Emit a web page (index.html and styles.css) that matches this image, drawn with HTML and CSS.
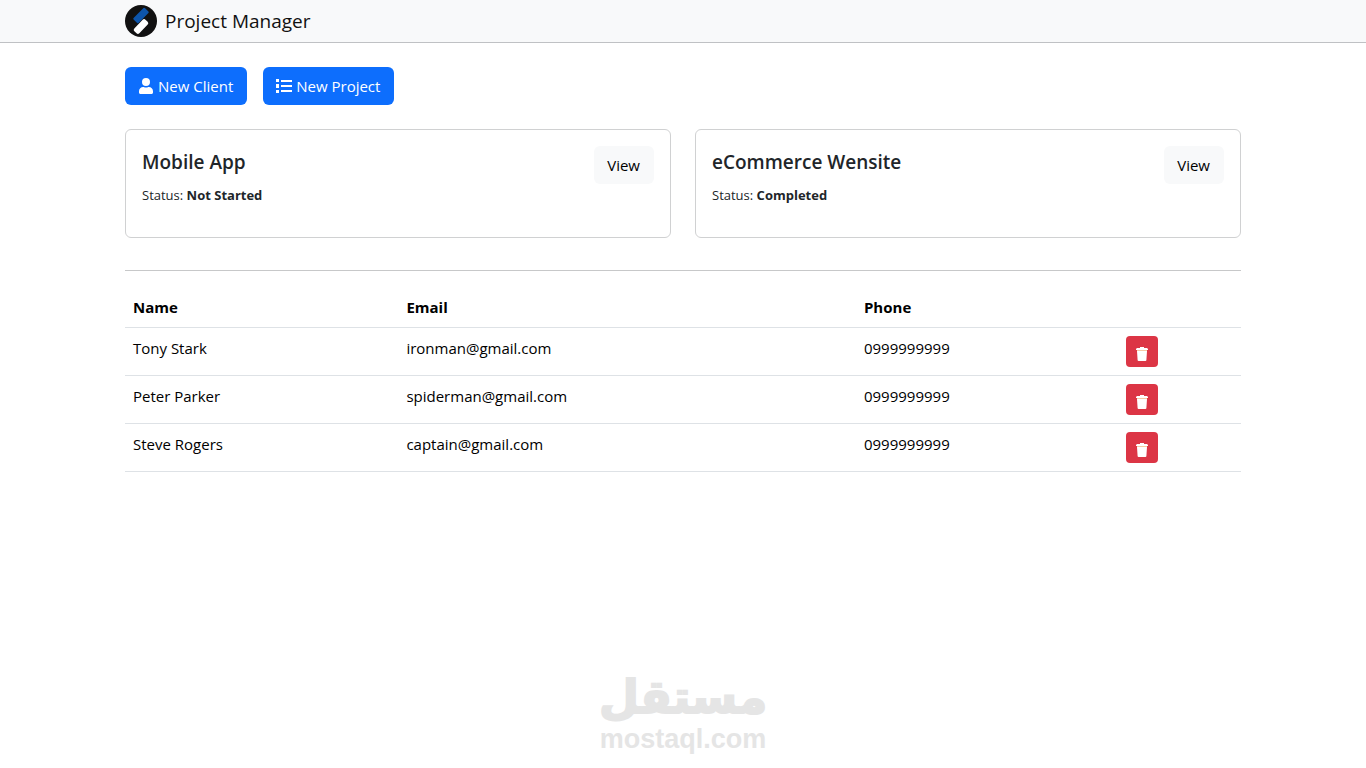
FILE: index.html
```html
<!DOCTYPE html>
<html lang="en">
<head>
    <meta charset="UTF-8">
    <meta name="viewport" content="width=device-width, initial-scale=1.0">
    <title>Project Manager</title>
    <link rel="stylesheet" href="styles.css">
</head>
<body>
    <!-- icons shared by the rows -->
    <svg class="sprite" aria-hidden="true">
        <symbol id="trash" viewBox="0 0 14 16">
            <path fill="#fff" d="M5 1h4v1h3l1 1v1H1V3l1-1h3z"/>
            <path fill="#f7c9a4" d="M2 4h10v1H2z"/>
            <path fill="#fff" d="M2 5h10l-.6 9q0 1-1 1H3.600q-1 0-1-1z"/>
        </symbol>
    </svg>

    <nav class="navbar">
        <div class="container">
            <a class="brand" href="#">
                <svg class="logo" viewBox="0 0 32 32" aria-hidden="true">
                    <circle cx="16" cy="16" r="16" fill="#111"/>
                    <rect x="-8" y="-3.500" width="16" height="7" rx="1" fill="#0d55ab" transform="translate(16 10.500) rotate(-45)"/>
                    <rect x="-8" y="-3.500" width="16" height="7" rx="2" fill="#fff" transform="translate(16 21.500) rotate(-46)"/>
                </svg>
                <span>Project Manager</span>
            </a>
        </div>
    </nav>

    <main class="container">
        <div class="actions">
            <button type="button" class="btn btn-primary">
                <svg class="icon" viewBox="-32 0 512 512" aria-hidden="true"><path fill="currentColor" d="M224 256A128 128 0 1 0 224 0a128 128 0 1 0 0 256zm90 32h-17a174 174 0 0 1-146 0h-17C60 288 0 348 0 422v42c0 27 21 48 48 48h352c27 0 48-21 48-48v-42c0-74-60-134-134-134z"/></svg>
                New Client
            </button>
            <button type="button" class="btn btn-primary">
                <svg class="icon" viewBox="0 0 16 16" aria-hidden="true"><path fill="currentColor" d="M0 1h3v3H0zM0 6h3v4H0zM0 12h3v3H0zM5 2h11v2H5zM5 7h11v2H5zM5 12h11v2H5z"/></svg>
                New Project
            </button>
        </div>

        <section class="projects">
            <article class="card">
                <div>
                    <h5>Mobile App</h5>
                    <p>Status: <strong>Not Started</strong></p>
                </div>
                <a class="btn btn-light" href="#">View</a>
            </article>
            <article class="card">
                <div>
                    <h5>eCommerce Wensite</h5>
                    <p>Status: <strong>Completed</strong></p>
                </div>
                <a class="btn btn-light" href="#">View</a>
            </article>
        </section>

        <hr>

        <table class="clients">
            <colgroup>
                <col class="col-name">
                <col class="col-email">
                <col class="col-phone">
                <col>
            </colgroup>
            <thead>
                <tr>
                    <th>Name</th>
                    <th>Email</th>
                    <th>Phone</th>
                    <th></th>
                </tr>
            </thead>
            <tbody>
                <tr>
                    <td>Tony Stark</td>
                    <td>ironman@gmail.com</td>
                    <td>0999999999</td>
                    <td><button type="button" class="btn-delete" aria-label="Delete Tony Stark"><svg><use href="#trash"/></svg></button></td>
                </tr>
                <tr>
                    <td>Peter Parker</td>
                    <td>spiderman@gmail.com</td>
                    <td>0999999999</td>
                    <td><button type="button" class="btn-delete" aria-label="Delete Peter Parker"><svg><use href="#trash"/></svg></button></td>
                </tr>
                <tr>
                    <td>Steve Rogers</td>
                    <td>captain@gmail.com</td>
                    <td>0999999999</td>
                    <td><button type="button" class="btn-delete" aria-label="Delete Steve Rogers"><svg><use href="#trash"/></svg></button></td>
                </tr>
            </tbody>
        </table>
    </main>

    <footer class="watermark">
        <span class="watermark-ar" lang="ar" dir="rtl">مستقل</span>
        <span class="watermark-en">mostaql.com</span>
    </footer>
</body>
</html>
```
FILE: styles.css
```css
* {
    box-sizing: border-box;
}
body {
    margin: 0;
    min-height: 100vh;
    display: flex;
    flex-direction: column;
    font-family: "Segoe UI", "Open Sans", "Noto Sans", sans-serif;
    font-size: 15px;
    line-height: 24px;
    color: #212529;
    background-color: #fff;
}
.sprite {
    position: absolute;
    width: 0;
    height: 0;
}
.container {
    width: 100%;
    max-width: 1140px;
    margin: 0 auto;
    padding: 0 12px;
}
.navbar {
    padding: 5px 0;
    background-color: #f8f9fa;
    border-bottom: 1px solid #bfc1c4;
}
.brand {
    display: flex;
    align-items: center;
    gap: 8px;
    width: fit-content;
    font-size: 19px;
    line-height: 32px;
    color: #111;
    text-decoration: none;
}
.logo {
    width: 32px;
    height: 32px;
}
.actions {
    display: flex;
    gap: 16px;
    margin: 24px 0;
}
.btn {
    display: flex;
    align-items: center;
    gap: 4px;
    height: 38px;
    padding: 0 14px 0 13px;
    border: none;
    border-radius: 6px;
    font: inherit;
    text-decoration: none;
    white-space: nowrap;
    cursor: pointer;
}
.btn-primary {
    color: #fff;
    background-color: #0d6efd;
}
.btn-primary:hover {
    background-color: #0b5ed7;
}
.btn-light {
    color: #000;
    background-color: #f8f9fa;
}
.icon {
    width: 16px;
    height: 16px;
}
.projects {
    display: grid;
    grid-template-columns: 1fr 1fr;
    gap: 24px;
}
.card {
    display: flex;
    justify-content: space-between;
    align-items: flex-start;
    min-height: 109px;
    padding: 16px;
    border: 1px solid #d0d1d2;
    border-radius: 6px;
}
.card h5 {
    margin: 0 0 6px;
    font-size: 19px;
    font-weight: 600;
    line-height: 32px;
}
.card p {
    margin: 0;
    font-size: 13px;
    line-height: 22px;
}
hr {
    margin: 32px 0 16px;
    border: 0;
    border-top: 1px solid #c7c8c9;
}
.clients {
    width: 100%;
    table-layout: fixed;
    border-collapse: separate;
    border-spacing: 0;
    color: #000;
}
.clients th,
.clients td {
    padding: 8px;
    text-align: left;
    vertical-align: top;
    border-bottom: 1px solid #dee2e6;
}
.col-name {
    width: 24.5%;
}
.col-email {
    width: 41%;
}
.col-phone {
    width: 23.5%;
}
.btn-delete {
    display: flex;
    justify-content: center;
    align-items: flex-end;
    width: 32px;
    height: 31px;
    padding: 0 0 5px;
    border: none;
    border-radius: 4px;
    background-color: #dc3545;
    cursor: pointer;
}
.btn-delete svg {
    width: 14px;
    height: 16px;
}
.watermark {
    display: flex;
    flex-direction: column;
    align-items: center;
    margin-top: auto;
    padding-bottom: 14px;
    color: #e5e5e5;
}
.watermark-ar {
    font-family: "DejaVu Sans", sans-serif;
    font-weight: bold;
    font-size: 46px;
    line-height: 54px;
    -webkit-text-stroke: 2px #e5e5e5;
}
.watermark-en {
    font-family: "Liberation Sans", Arial, sans-serif;
    font-weight: bold;
    font-size: 27px;
    line-height: 30px;
}
```
